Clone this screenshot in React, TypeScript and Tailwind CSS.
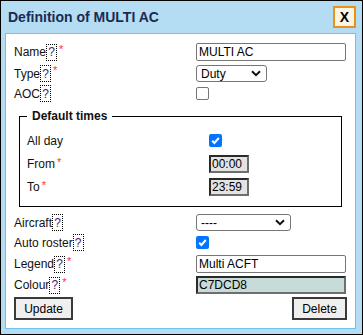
import React from "react";

const font = { fontFamily: '"Liberation Sans", Arial, sans-serif' };

function Help() {
  return (
    <span className="inline-flex h-[17px] w-[11px] items-center justify-center border border-dotted border-black text-[12px] leading-none text-[#4a1d6e]">
      ?
    </span>
  );
}

function Req() {
  return <span className="ml-[2px] self-start text-[11px] leading-[11px] text-[#ff3333]">*</span>;
}

function Label({ text, help = true, req = false }: { text: string; help?: boolean; req?: boolean }) {
  return (
    <div className="flex w-[182px] shrink-0 items-center text-[12px] leading-[14px] text-[#111]">
      <span>{text}</span>
      {help && <Help />}
      {req && <Req />}
    </div>
  );
}

function TextBox({ value, w = 150 }: { value: string; w?: number }) {
  return (
    <div
      className="flex h-[18px] items-center rounded-[2px] border border-[#767676] bg-white pl-[2px] text-[12px] leading-none text-black"
      style={{ width: w }}
    >
      {value}
    </div>
  );
}

function InsetBox({ value, w, bg }: { value: string; w: number; bg: string }) {
  return (
    <div
      className="flex h-[18px] items-center border-2 border-t-[#2a2a2a] border-l-[#2a2a2a] border-r-[#6e6e6e] border-b-[#6e6e6e] pl-[1px] text-[12px] leading-none text-black"
      style={{ width: w, background: bg }}
    >
      {value}
    </div>
  );
}

function SelectBox({ value, w }: { value: string; w: number }) {
  return (
    <div
      className="flex h-[17px] items-center justify-between rounded-[3px] border border-[#767676] bg-white pl-[4px] pr-[5px] text-[12px] leading-none text-black"
      style={{ width: w }}
    >
      <span>{value}</span>
      <svg width="10" height="7" viewBox="0 0 10 7">
        <path d="M1 1.2 L5 5.2 L9 1.2" fill="none" stroke="#111" strokeWidth="2" />
      </svg>
    </div>
  );
}

function Check({ checked }: { checked: boolean }) {
  if (checked) {
    return (
      <div className="flex h-[13px] w-[13px] items-center justify-center rounded-[2px] bg-[#0075ff]">
        <svg width="11" height="11" viewBox="0 0 11 11">
          <path d="M2.2 5.8 L4.4 8 L8.8 3" fill="none" stroke="white" strokeWidth="2" />
        </svg>
      </div>
    );
  }
  return <div className="h-[13px] w-[13px] rounded-[2px] border border-[#767676] bg-white" />;
}

function Btn({ text, w }: { text: string; w: number }) {
  return (
    <div
      className="flex h-[23px] items-center justify-center border-2 border-[#3a3a3a] bg-[#efefef] text-[12px] leading-none text-black"
      style={{ width: w }}
    >
      {text}
    </div>
  );
}

export default function App() {
  return (
    <div style={font} className="flex h-[335px] w-[363px] flex-col border border-black bg-[#b4ddf3]">
      <div className="flex h-[32px] shrink-0 items-center justify-between pl-[7px] pr-[6px]">
        <span className="text-[14px] font-bold text-[#1b2a52]">Definition of MULTI AC</span>
        <div className="flex h-[22px] w-[23px] items-center justify-center border-2 border-[#e8921a] bg-[#fdf4e3] text-[14px] font-bold leading-none text-black">
          X
        </div>
      </div>
      <div className="mb-[5px] ml-[4px] mr-[6px] flex flex-1 flex-col border border-[#72c0ec] bg-white pl-[8px] pr-[8px] pt-[9px]">
        <div className="flex h-[18px] items-center">
          <Label text="Name" req />
          <TextBox value="MULTI AC" />
        </div>
        <div className="mt-[4px] flex h-[17px] items-center">
          <Label text="Type" req />
          <SelectBox value="Duty" w={71} />
        </div>
        <div className="mt-[5px] flex h-[13px] items-center">
          <Label text="AOC" />
          <Check checked={false} />
        </div>

        <fieldset className="mr-[5px] mt-[9px] ml-[5px] border border-black pb-[10px] pl-[7px]">
          <legend className="px-[5px] text-[12px] font-bold leading-[14px] text-[#111]">Default times</legend>
          <div className="mt-[11px] flex h-[13px] items-center">
            <div className="w-[182px] shrink-0 text-[12px] leading-[14px] text-[#111]">All day</div>
            <Check checked />
          </div>
          <div className="mt-[8px] flex h-[18px] items-center">
            <div className="flex w-[182px] shrink-0 items-center text-[12px] leading-[14px] text-[#111]">
              <span>From</span>
              <Req />
            </div>
            <InsetBox value="00:00" w={40} bg="#e3e3e3" />
          </div>
          <div className="mt-[5px] flex h-[18px] items-center">
            <div className="flex w-[182px] shrink-0 items-center text-[12px] leading-[14px] text-[#111]">
              <span>To</span>
              <Req />
            </div>
            <InsetBox value="23:59" w={40} bg="#e3e3e3" />
          </div>
        </fieldset>

        <div className="mt-[7px] flex h-[17px] items-center">
          <Label text="Aircraft" />
          <SelectBox value="----" w={95} />
        </div>
        <div className="mt-[5px] flex h-[13px] items-center">
          <Label text="Auto roster" />
          <Check checked />
        </div>
        <div className="mt-[6px] flex h-[18px] items-center">
          <Label text="Legend" req />
          <TextBox value="Multi ACFT" />
        </div>
        <div className="mt-[3px] flex h-[18px] items-center">
          <Label text="Colour" req />
          <InsetBox value="C7DCD8" w={150} bg="#c7dcd8" />
        </div>
        <div className="mt-[3px] flex items-center justify-between">
          <Btn text="Update" w={59} />
          <Btn text="Delete" w={55} />
        </div>
      </div>
    </div>
  );
}
